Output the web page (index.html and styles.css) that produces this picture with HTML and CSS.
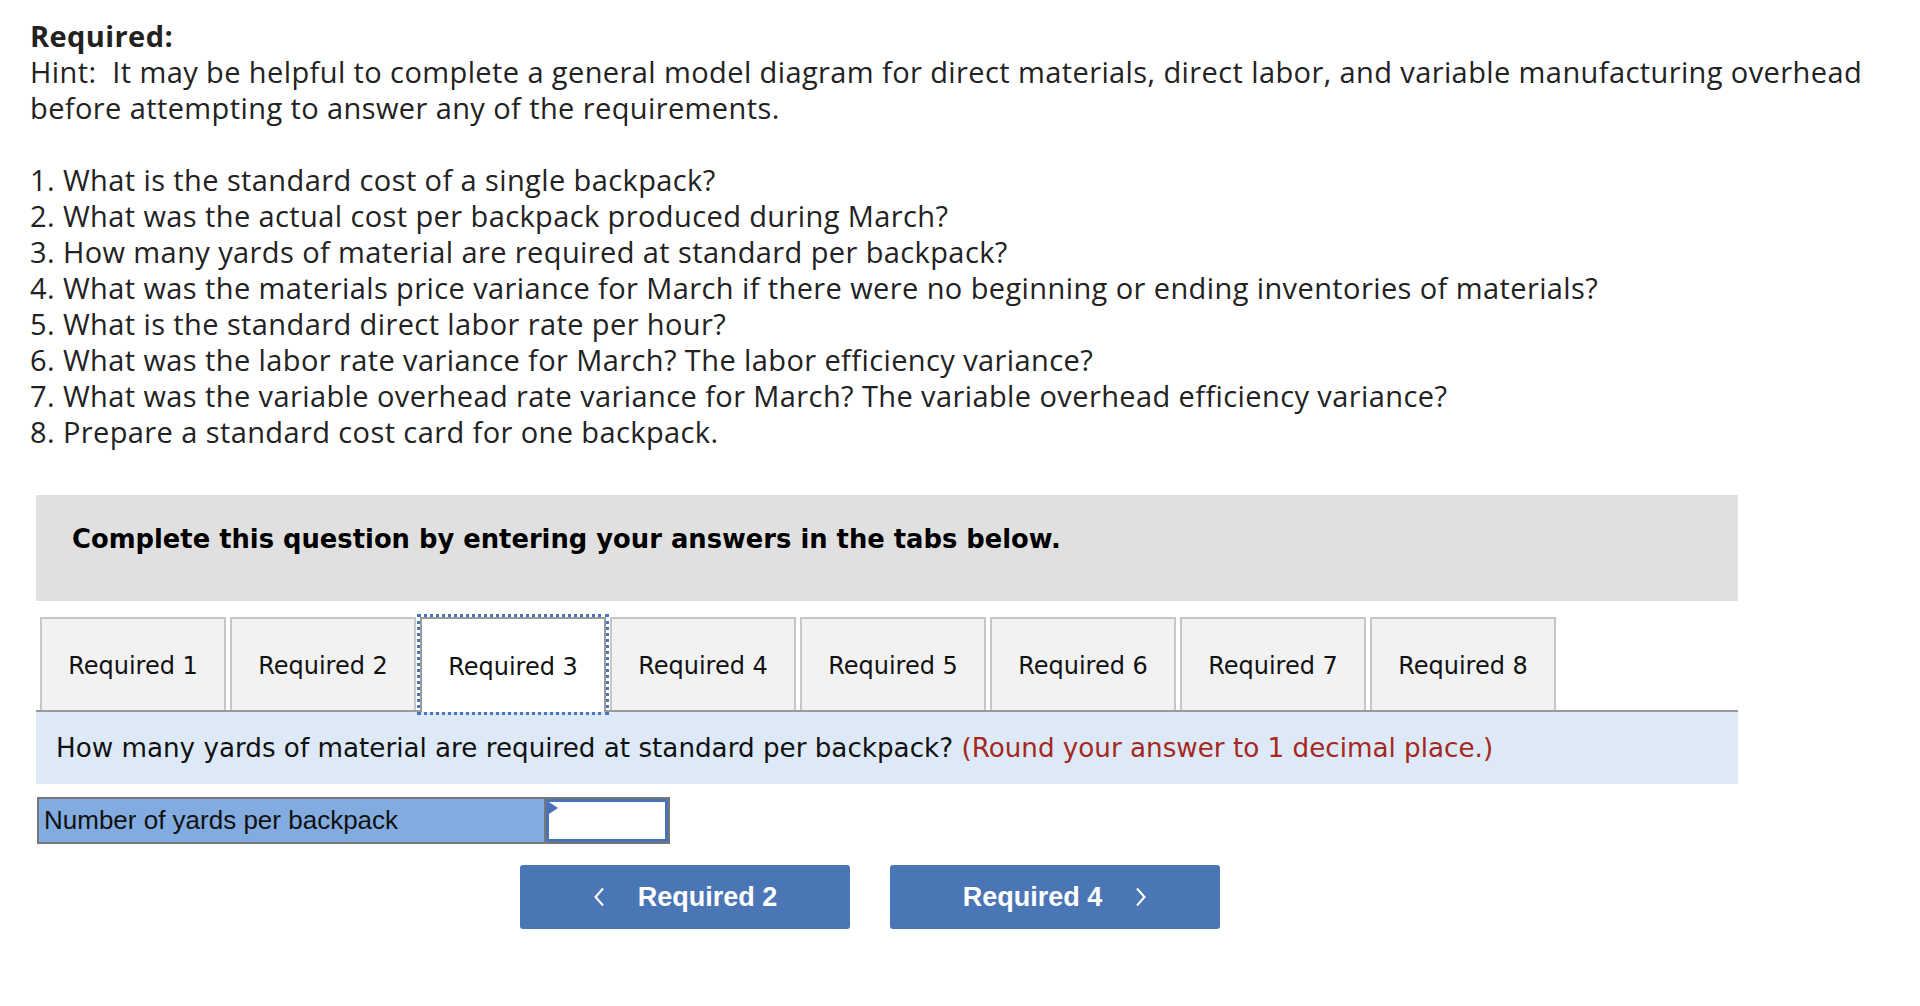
FILE: index.html
```html
<!DOCTYPE html>
<html lang="en">
<head>
<meta charset="utf-8">
<title>Required</title>
<link rel="stylesheet" href="styles.css">
</head>
<body>
<div class="page">
  <div class="intro">
    <strong class="req">Required:</strong><br>
    Hint:&nbsp; It may be helpful to complete a general model diagram for direct materials, direct labor, and variable manufacturing overhead<br>
    before attempting to answer any of the requirements.<br><br>
    1. What is the standard cost of a single backpack?<br>
    2. What was the actual cost per backpack produced during March?<br>
    3. How many yards of material are required at standard per backpack?<br>
    4. What was the materials price variance for March if there were no beginning or ending inventories of materials?<br>
    5. What is the standard direct labor rate per hour?<br>
    6. What was the labor rate variance for March? The labor efficiency variance?<br>
    7. What was the variable overhead rate variance for March? The variable overhead efficiency variance?<br>
    8. Prepare a standard cost card for one backpack.
  </div>

  <div class="qa">
    <div class="banner">Complete this question by entering your answers in the tabs below.</div>

    <div class="tabs">
      <div class="tab">Required 1</div>
      <div class="tab">Required 2</div>
      <div class="tab active">Required 3</div>
      <div class="tab">Required 4</div>
      <div class="tab">Required 5</div>
      <div class="tab">Required 6</div>
      <div class="tab">Required 7</div>
      <div class="tab">Required 8</div>
    </div>

    <div class="prompt">How many yards of material are required at standard per backpack?&nbsp;<span class="round">(Round your answer to 1 decimal place.)</span></div>

    <div class="answer-row">
      <div class="label">Number of yards per backpack</div>
      <div class="input"><span class="flag"></span></div>
    </div>

    <div class="nav">
      <div class="navbtn">
        <svg class="chev" width="12" height="20" viewBox="0 0 12 20"><polyline points="10,1.5 2.5,10 10,18.5" fill="none" stroke="#fff" stroke-width="2"/></svg>
        <span>Required 2</span>
      </div>
      <div class="navbtn">
        <span>Required 4</span>
        <svg class="chev" width="12" height="20" viewBox="0 0 12 20"><polyline points="2,1.5 9.5,10 2,18.5" fill="none" stroke="#fff" stroke-width="2"/></svg>
      </div>
    </div>
  </div>
</div>
</body>
</html>
```

FILE: styles.css
```css
html, body {
  margin: 0;
  padding: 0;
  background: #ffffff;
}

.page {
  padding: 18px 0 0 30px;
}

.intro {
  font-family: "Open Sans", Lato, sans-serif;
  font-size: 29px;
  line-height: 36px;
  letter-spacing: 0.4px;
  color: #222222;
  white-space: nowrap;
}

.req {
  font-weight: 700;
}

.qa {
  margin-top: 45px;
  margin-left: 6px;
  width: 1702px;
}

.banner {
  box-sizing: border-box;
  height: 106px;
  background: #e0e0e0;
  padding: 29px 0 0 36px;
  font-family: "DejaVu Sans", Verdana, sans-serif;
  font-weight: 700;
  font-size: 25.8px;
  line-height: 30px;
  color: #000000;
}

.tabs {
  display: flex;
  gap: 4px;
  margin-top: 16px;
  padding-left: 4px;
  border-bottom: 2px solid #9a9a9a;
  height: 93px;
}

.tab {
  box-sizing: border-box;
  width: 186px;
  height: 93px;
  border: 2px solid #c6c6c6;
  border-bottom: none;
  background: #f2f2f2;
  display: flex;
  align-items: center;
  justify-content: center;
  padding-top: 2px;
  font-family: "DejaVu Sans", Verdana, sans-serif;
  font-size: 24px;
  color: #111111;
}

.tab.active {
  background: #ffffff;
  border-color: #9a9a9a;
  height: 95px;
  margin-bottom: -2px;
  outline: 3px dotted #4a76b8;
  outline-offset: 0;
}

.prompt {
  box-sizing: border-box;
  height: 72px;
  background: #dde9f7;
  padding-left: 20px;
  display: flex;
  align-items: center;
  font-family: "DejaVu Sans", Verdana, sans-serif;
  font-size: 26.2px;
  color: #111111;
  white-space: nowrap;
}

.round {
  color: #a5281f;
}

.answer-row {
  display: flex;
  width: fit-content;
  margin-top: 13px;
  margin-left: 1px;
  border: 2px solid #777777;
}

.label {
  box-sizing: border-box;
  width: 507px;
  height: 43px;
  background: #82abdf;
  border-right: 2px solid #777777;
  padding-left: 5px;
  font-family: "Liberation Sans", Arial, sans-serif;
  font-size: 26px;
  line-height: 43px;
  color: #111111;
}

.input {
  position: relative;
  box-sizing: border-box;
  width: 122px;
  height: 43px;
  border: 3px solid #4a72b8;
  background: #ffffff;
}

.flag {
  position: absolute;
  top: 0;
  left: 0;
  width: 0;
  height: 0;
  border-left: 9px solid #4a72b8;
  border-top: 6px solid transparent;
  border-bottom: 6px solid transparent;
}

.nav {
  display: flex;
  gap: 40px;
  margin-top: 21px;
  margin-left: 484px;
}

.navbtn {
  box-sizing: border-box;
  width: 330px;
  height: 64px;
  background: #4a76b5;
  border-radius: 3px;
  display: flex;
  align-items: center;
  justify-content: center;
  gap: 33px;
  color: #ffffff;
  font-family: "Liberation Sans", Arial, sans-serif;
  font-weight: 700;
  font-size: 27px;
}

.chev {
  display: block;
}
```
